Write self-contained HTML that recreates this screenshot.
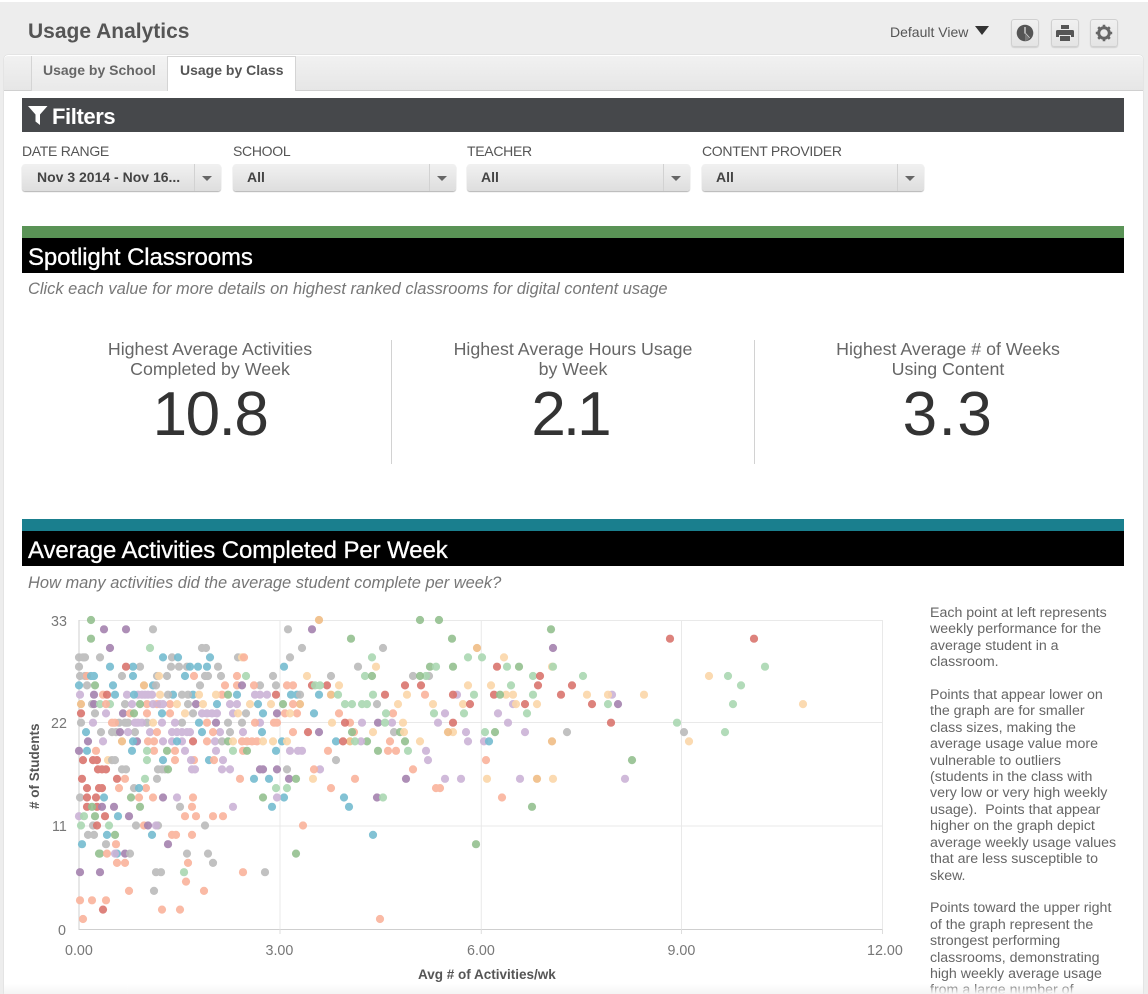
<!DOCTYPE html>
<html><head><meta charset="utf-8"><title>Usage Analytics</title>
<style>
html,body{margin:0;padding:0;background:#fff}
#w{position:relative;width:1148px;height:994px;overflow:hidden;background:#ededed;font-family:"Liberation Sans",sans-serif;filter:blur(.35px)}
#w div,#w span.a{position:absolute;white-space:nowrap}
.btn{top:19px;width:26px;height:26px;border:1px solid #d0d0d0;border-radius:3px;background:linear-gradient(#f0f0f0,#e4e4e4);box-shadow:0 1px 1px rgba(0,0,0,.12)}
.lab{top:143px;font-size:14px;line-height:17px;color:#555;letter-spacing:-.3px}
.sel{top:164px;height:27px;border-radius:3px;background:linear-gradient(#f1f1f1,#dedede);box-shadow:0 1px 1px rgba(0,0,0,.3);font-size:14px;font-weight:bold;color:#444;line-height:27px}
.sel b{position:absolute;top:0;width:1px;height:27px;background:#d2d2d2}
.sel i{position:absolute;top:12px;width:0;height:0;border-left:5.5px solid transparent;border-right:5.5px solid transparent;border-top:5px solid #666}
.bar{left:22px;width:1102px;height:35px;background:#000;color:#fff;font-size:24px;line-height:40px;text-indent:6px;letter-spacing:-.1px;-webkit-text-stroke:.3px #fff}
.sub{left:28px;font-size:16.45px;line-height:18px;font-style:italic;color:#777}
.st{width:340px;text-align:center;font-size:17.8px;line-height:20px;color:#666;top:339px}
.num{width:340px;text-align:center;font-size:62px;line-height:70px;color:#333;top:380px}
.vl{top:340px;width:1px;height:124px;background:#d2d2d2}
svg{position:absolute;overflow:visible}
#c path{fill:none;stroke-linecap:round;stroke-width:8.2;opacity:.9}
.r{stroke:#d9746e}.s{stroke:#f9b39b}.o{stroke:#fbd6a8}.u{stroke:#efbd85}.g{stroke:#94c08f}.l{stroke:#aad7b1}.p{stroke:#a482ae}.q{stroke:#cbb2d6}.k{stroke:#bababa}.t{stroke:#74bbcf}
.ax{font-size:14.3px;fill:#777}
.ttl{font-size:13.5px;font-weight:bold;fill:#555}
#tx{left:930px;top:605px;font-size:14.2px;line-height:16.4px;color:#666}
</style></head>
<body><div id="w">
<div style="left:0;top:0;width:1148px;height:2px;background:#fff"></div>
<div style="left:28px;top:19px;font-size:21px;line-height:26px;font-weight:bold;color:#555">Usage Analytics</div>
<div style="left:890px;top:24px;font-size:14px;line-height:17px;color:#555">Default View</div>
<div style="left:975px;top:26px;width:0;height:0;border-left:7.5px solid transparent;border-right:7.5px solid transparent;border-top:9px solid #333"></div>
<div class="btn" style="left:1011px"><svg style="left:4px;top:4px" width="18" height="18" viewBox="0 0 18 18"><circle cx="9" cy="9" r="8.3" fill="#555"/><path d="M9 3v6l4.5 5" fill="none" stroke="#e8e8e8" stroke-width="1.2"/><path d="M9 9l4.5 5A8.3 8.3 0 0 1 9 17.3z" fill="#777"/></svg></div>
<div class="btn" style="left:1051px"><svg style="left:4px;top:5px" width="18" height="16" viewBox="0 0 18 16"><path d="M5 0h8v4H5zM1.500 5h15a1.500 1.500 0 0 1 1.500 1.500V12h-3v-2H3v2H0V6.500A1.500 1.500 0 0 1 1.500 5zM4 11h10v5H4z" fill="#555"/></svg></div>
<div class="btn" style="left:1090px"><svg style="left:4px;top:4px" width="18" height="18" viewBox="0 0 18 18"><circle cx="9" cy="9" r="5.3" fill="none" stroke="#666" stroke-width="3"/><path d="M9 .8V4M9 14v3.200M.8 9H4M14 9h3.200M3.200 3.200l2.300 2.300M12.500 12.500l2.300 2.300M14.800 3.200l-2.300 2.300M5.500 12.500l-2.300 2.300" stroke="#666" stroke-width="2.600" fill="none"/></svg></div>

<div style="left:4px;top:55px;width:1139px;height:939px;background:#fff;border-radius:4px 4px 0 0;box-shadow:0 0 1px #bbb"></div>
<div style="left:4px;top:56px;width:1139px;height:34px;background:linear-gradient(#f1f1f1,#e6e6e6);border-bottom:1px solid #d0d0d0;border-radius:4px 4px 0 0"></div>
<div style="left:31px;top:56px;width:135px;height:35px;background:linear-gradient(#f3f3f3,#e9e9e9);border-left:1px solid #d4d4d4;font-size:14px;font-weight:bold;color:#666;line-height:28px;text-indent:11px">Usage by School</div>
<div style="left:167px;top:56px;width:129px;height:35px;background:#fff;border:1px solid #d4d4d4;border-bottom:0;box-sizing:border-box;font-size:14px;font-weight:bold;color:#555;line-height:27px;text-indent:12px">Usage by Class</div>

<div style="left:22px;top:98px;width:1102px;height:34px;background:#46484b;color:#fff;font-size:22px;font-weight:bold;line-height:38px;text-indent:30px;letter-spacing:-.4px">Filters</div>
<svg style="left:28px;top:106px" width="20" height="19" viewBox="0 0 20 19"><path d="M0 0h19.500L12 8.500V19l-4.500-3.500v-7z" fill="#fff"/></svg>

<div class="lab" style="left:22px">DATE RANGE</div>
<div class="lab" style="left:233px">SCHOOL</div>
<div class="lab" style="left:467px">TEACHER</div>
<div class="lab" style="left:702px">CONTENT PROVIDER</div>
<div class="sel" style="left:22px;width:199px;text-indent:15px">Nov 3 2014 - Nov 16...<b style="left:172px"></b><i style="left:180px"></i></div>
<div class="sel" style="left:233px;width:223px;text-indent:14px">All<b style="left:196px"></b><i style="left:204px"></i></div>
<div class="sel" style="left:467px;width:223px;text-indent:14px">All<b style="left:196px"></b><i style="left:204px"></i></div>
<div class="sel" style="left:702px;width:222px;text-indent:14px">All<b style="left:195px"></b><i style="left:203px"></i></div>

<div style="left:22px;top:226px;width:1102px;height:12px;background:#5a9356"></div>
<div class="bar" style="top:238px">Spotlight Classrooms</div>
<div class="sub" style="top:280px">Click each value for more details on highest ranked classrooms for digital content usage</div>

<div class="st" style="left:40px">Highest Average Activities<br>Completed by Week</div>
<div class="num" style="left:40px;letter-spacing:-1.5px">10.8</div>
<div class="vl" style="left:391px"></div>
<div class="st" style="left:403px">Highest Average Hours Usage<br>by Week</div>
<div class="num" style="left:400px;letter-spacing:-3px">2.1</div>
<div class="vl" style="left:754px"></div>
<div class="st" style="left:778px">Highest Average # of Weeks<br>Using Content</div>
<div class="num" style="left:778px;letter-spacing:1.5px">3.3</div>

<div style="left:22px;top:519px;width:1102px;height:12px;background:#1a7f8e"></div>
<div class="bar" style="top:531px">Average Activities Completed Per Week</div>
<div class="sub" style="top:574px">How many activities did the average student complete per week?</div>

<svg style="left:0;top:0" width="1148" height="994" viewBox="0 0 1148 994">
<path d="M79 620.500H882.500V929M79 722.500H882.500M79 826H882.500M280 620.500V929M481.300 620.500V929M681.500 620.500V929" fill="none" stroke="#e9e9e9" stroke-width="1"/>
<path d="M79 620V929.500H882.500" fill="none" stroke="#cfcfcf" stroke-width="1"/>
<path d="M280 929v5M481.300 929v5M681.500 929v5M882.500 929v5" stroke="#ddd" fill="none"/>
<text class="ax" x="51" y="626">33</text><text class="ax" x="51" y="728">22</text><text class="ax" x="52" y="831">11</text><text class="ax" x="58" y="935">0</text>
<text class="ax" x="65" y="955">0.00</text><text class="ax" x="265.500" y="955">3.00</text><text class="ax" x="467" y="955">6.00</text><text class="ax" x="667.500" y="955">9.00</text><text class="ax" x="867" y="955">12.00</text>
<text class="ttl" x="418" y="979">Avg # of Activities/wk</text>
<text class="ttl" transform="translate(39,809) rotate(-90)">
# of Students</text>
<g id="c">
<g transform="translate(0,620)"><path class="g" d="M91 0h0M420 0h0M439 0h0"/><path class="u" d="M319 0h0"/></g>
<g transform="translate(0,629.3)"><path class="p" d="M104 0h0M126 0h0M312 0h0"/><path class="k" d="M153 0h0M288 0h0"/><path class="g" d="M551 0h0"/></g>
<g transform="translate(0,638.7)"><path class="g" d="M91 0h0M351 0h0M452 0h0"/><path class="r" d="M670 0h0M754 0h0"/></g>
<g transform="translate(0,648)"><path class="p" d="M110 0h0M553 0h0"/><path class="l" d="M150 0h0"/><path class="k" d="M202 0h0M206 0h0M302 0h0M383 0h0"/><path class="u" d="M477 0h0"/></g>
<g transform="translate(0,657.4)"><path class="k" d="M79 0h0M83 0h0M85 0h0M100 0h0M172 0h0M238 0h0M290 0h0"/><path class="t" d="M163 0h0M178 0h0M210 0h0"/><path class="o" d="M242 0h0"/><path class="s" d="M244 0h0"/><path class="l" d="M372 0h0M468 0h0M482 0h0"/><path class="o" d="M504 0h0"/></g>
<g transform="translate(0,666.7)"><path class="k" d="M79 0h0M140 0h0M171 0h0M179 0h0M187 0h0M218 0h0M358 0h0"/><path class="t" d="M110 0h0M133 0h0M190 0h0M198 0h0M207 0h0M284 0h0"/><path class="r" d="M126 0h0M497 0h0"/><path class="o" d="M376 0h0M552 0h0"/><path class="g" d="M430 0h0M453 0h0M519 0h0"/><path class="l" d="M436 0h0M507 0h0M553 0h0M765 0h0"/></g>
<g transform="translate(0,676)"><path class="k" d="M80 0h0M85 0h0M122 0h0M157 0h0M167 0h0M205 0h0M208 0h0M221 0h0M273 0h0M331 0h0M413 0h0M429 0h0"/><path class="s" d="M87 0h0M194 0h0M237 0h0"/><path class="t" d="M91 0h0M94 0h0M133 0h0M185 0h0"/><path class="o" d="M159 0h0M307 0h0M709 0h0"/><path class="l" d="M246 0h0M365 0h0M426 0h0M533 0h0M583 0h0M728 0h0"/><path class="g" d="M372 0h0M420 0h0"/><path class="r" d="M540 0h0"/></g>
<g transform="translate(0,685.4)"><path class="t" d="M79 0h0M113 0h0M153 0h0"/><path class="k" d="M87 0h0M156 0h0M200 0h0M260 0h0M276 0h0"/><path class="g" d="M95 0h0"/><path class="u" d="M144 0h0"/><path class="s" d="M225 0h0M237 0h0M254 0h0M287 0h0M293 0h0"/><path class="p" d="M242 0h0"/><path class="r" d="M312 0h0M327 0h0M405 0h0M421 0h0M538 0h0M572 0h0"/><path class="l" d="M315 0h0M320 0h0M511 0h0M741 0h0"/><path class="o" d="M339 0h0M468 0h0M491 0h0"/></g>
<g transform="translate(0,694.7)"><path class="q" d="M80 0h0M127 0h0M138 0h0M142 0h0M145 0h0M148 0h0M152 0h0M255 0h0M260 0h0M267 0h0M457 0h0M612 0h0"/><path class="p" d="M94 0h0"/><path class="s" d="M103 0h0M222 0h0M425 0h0"/><path class="r" d="M107 0h0M276 0h0M385 0h0M453 0h0M494 0h0M561 0h0"/><path class="t" d="M115 0h0M134 0h0M173 0h0M193 0h0M237 0h0M291 0h0M297 0h0M319 0h0"/><path class="o" d="M160 0h0M199 0h0M216 0h0M407 0h0M506 0h0M513 0h0M587 0h0M608 0h0M644 0h0"/><path class="k" d="M168 0h0M182 0h0M188 0h0M300 0h0"/><path class="g" d="M228 0h0M500 0h0"/><path class="u" d="M331 0h0"/><path class="l" d="M338 0h0M373 0h0M474 0h0M533 0h0"/></g>
<g transform="translate(0,704.1)"><path class="u" d="M81 0h0M300 0h0"/><path class="k" d="M92 0h0M125 0h0M188 0h0M377 0h0"/><path class="p" d="M94 0h0M196 0h0M618 0h0"/><path class="l" d="M100 0h0M110 0h0M345 0h0M352 0h0M362 0h0M367 0h0M608 0h0M733 0h0"/><path class="s" d="M106 0h0M147 0h0M157 0h0M170 0h0M293 0h0"/><path class="q" d="M132 0h0M153 0h0M160 0h0M163 0h0M230 0h0M237 0h0M513 0h0"/><path class="g" d="M140 0h0M283 0h0"/><path class="o" d="M177 0h0M203 0h0M250 0h0M271 0h0M398 0h0M433 0h0M463 0h0M516 0h0M537 0h0M803 0h0"/><path class="t" d="M217 0h0M258 0h0"/><path class="r" d="M470 0h0M525 0h0M592 0h0"/></g>
<g transform="translate(0,713.4)"><path class="r" d="M81 0h0"/><path class="k" d="M95 0h0M193 0h0M246 0h0"/><path class="q" d="M106 0h0M202 0h0M207 0h0M212 0h0M217 0h0M233 0h0M445 0h0M498 0h0"/><path class="p" d="M123 0h0M277 0h0"/><path class="s" d="M130 0h0M147 0h0M170 0h0M285 0h0M297 0h0M339 0h0M393 0h0"/><path class="g" d="M134 0h0"/><path class="t" d="M162 0h0M263 0h0M314 0h0"/><path class="o" d="M185 0h0M238 0h0M290 0h0"/><path class="l" d="M386 0h0M434 0h0M464 0h0M527 0h0"/></g>
<g transform="translate(0,722.7)"><path class="k" d="M81 0h0M119 0h0M125 0h0M128 0h0M147 0h0M182 0h0M228 0h0M242 0h0"/><path class="q" d="M93 0h0M135 0h0M138 0h0M142 0h0M162 0h0M175 0h0M260 0h0M362 0h0M392 0h0M438 0h0M508 0h0"/><path class="s" d="M112 0h0M115 0h0M207 0h0M255 0h0M274 0h0M277 0h0M350 0h0"/><path class="o" d="M153 0h0M332 0h0M403 0h0"/><path class="t" d="M199 0h0"/><path class="p" d="M216 0h0M378 0h0"/><path class="r" d="M345 0h0M453 0h0M611 0h0"/><path class="l" d="M385 0h0M677 0h0"/></g>
<g transform="translate(0,732.1)"><path class="t" d="M86 0h0M202 0h0M262 0h0"/><path class="k" d="M101 0h0M112 0h0M116 0h0M135 0h0M230 0h0M394 0h0M567 0h0M684 0h0"/><path class="p" d="M120 0h0M319 0h0"/><path class="q" d="M128 0h0M150 0h0M172 0h0M177 0h0M182 0h0M187 0h0M190 0h0M220 0h0M243 0h0M466 0h0M525 0h0"/><path class="s" d="M157 0h0M213 0h0M293 0h0M354 0h0"/><path class="r" d="M308 0h0"/><path class="g" d="M352 0h0M400 0h0M495 0h0"/><path class="o" d="M373 0h0M404 0h0M453 0h0"/><path class="u" d="M448 0h0"/><path class="l" d="M485 0h0M725 0h0"/></g>
<g transform="translate(0,741.4)"><path class="p" d="M88 0h0M137 0h0"/><path class="q" d="M103 0h0M163 0h0M172 0h0M182 0h0M215 0h0M468 0h0M484 0h0"/><path class="u" d="M122 0h0M350 0h0M552 0h0"/><path class="t" d="M133 0h0M177 0h0M282 0h0M336 0h0M489 0h0"/><path class="s" d="M148 0h0M154 0h0M207 0h0M242 0h0M247 0h0M252 0h0M257 0h0M390 0h0"/><path class="r" d="M193 0h0M343 0h0"/><path class="k" d="M222 0h0"/><path class="g" d="M228 0h0M367 0h0M405 0h0"/><path class="o" d="M233 0h0M263 0h0M273 0h0M287 0h0M420 0h0M689 0h0"/><path class="q" d="M361 0h0"/><path class="l" d="M355 0h0"/></g>
<g transform="translate(0,750.8)"><path class="p" d="M79 0h0"/><path class="t" d="M87 0h0M132 0h0M276 0h0"/><path class="s" d="M96 0h0M154 0h0M175 0h0M243 0h0M328 0h0M388 0h0M396 0h0"/><path class="l" d="M147 0h0M233 0h0M408 0h0"/><path class="g" d="M167 0h0M247 0h0M378 0h0"/><path class="q" d="M185 0h0M216 0h0M290 0h0M298 0h0M302 0h0M426 0h0"/></g>
<g transform="translate(0,760.1)"><path class="r" d="M83 0h0M93 0h0M97 0h0"/><path class="o" d="M108 0h0"/><path class="k" d="M112 0h0M115 0h0M336 0h0"/><path class="l" d="M147 0h0"/><path class="t" d="M163 0h0M209 0h0"/><path class="s" d="M175 0h0M194 0h0M214 0h0M486 0h0"/><path class="q" d="M191 0h0M223 0h0M428 0h0"/><path class="g" d="M632 0h0"/></g>
<g transform="translate(0,769.4)"><path class="r" d="M98 0h0M102 0h0M106 0h0"/><path class="k" d="M122 0h0M126 0h0M158 0h0M162 0h0M165 0h0M287 0h0"/><path class="g" d="M168 0h0"/><path class="q" d="M192 0h0M195 0h0M222 0h0M230 0h0M320 0h0"/><path class="p" d="M260 0h0M263 0h0M277 0h0"/><path class="s" d="M314 0h0M413 0h0"/></g>
<g transform="translate(0,778.8)"><path class="r" d="M82 0h0M117 0h0"/><path class="s" d="M125 0h0M240 0h0M355 0h0"/><path class="l" d="M145 0h0"/><path class="k" d="M157 0h0"/><path class="t" d="M254 0h0M269 0h0"/><path class="p" d="M289 0h0M406 0h0"/><path class="g" d="M296 0h0"/><path class="o" d="M313 0h0M487 0h0M553 0h0"/><path class="q" d="M445 0h0M461 0h0M520 0h0M625 0h0"/><path class="u" d="M537 0h0"/></g>
<g transform="translate(0,788.1)"><path class="r" d="M87 0h0M99 0h0M102 0h0"/><path class="s" d="M119 0h0M146 0h0M331 0h0M436 0h0M440 0h0"/><path class="k" d="M134 0h0"/><path class="t" d="M139 0h0"/><path class="l" d="M276 0h0M287 0h0"/></g>
<g transform="translate(0,797.5)"><path class="k" d="M80 0h0"/><path class="r" d="M87 0h0M96 0h0"/><path class="t" d="M104 0h0M284 0h0M344 0h0"/><path class="g" d="M131 0h0M263 0h0"/><path class="s" d="M139 0h0M153 0h0M193 0h0M502 0h0"/><path class="p" d="M163 0h0M377 0h0"/><path class="q" d="M177 0h0M277 0h0"/><path class="l" d="M383 0h0"/></g>
<g transform="translate(0,806.8)"><path class="r" d="M87 0h0M97 0h0"/><path class="g" d="M92 0h0M140 0h0M532 0h0"/><path class="p" d="M102 0h0M114 0h0"/><path class="k" d="M180 0h0"/><path class="s" d="M192 0h0"/><path class="q" d="M233 0h0"/><path class="t" d="M272 0h0M349 0h0"/></g>
<g transform="translate(0,816.2)"><path class="q" d="M79 0h0"/><path class="l" d="M84 0h0"/><path class="g" d="M95 0h0"/><path class="r" d="M105 0h0"/><path class="t" d="M118 0h0"/><path class="p" d="M129 0h0"/><path class="s" d="M185 0h0M196 0h0M213 0h0M223 0h0"/></g>
<g transform="translate(0,825.5)"><path class="l" d="M81 0h0M109 0h0"/><path class="k" d="M93 0h0M136 0h0M158 0h0M205 0h0"/><path class="r" d="M97 0h0"/><path class="s" d="M144 0h0M303 0h0"/><path class="p" d="M148 0h0"/><path class="q" d="M156 0h0"/></g>
<g transform="translate(0,834.9)"><path class="k" d="M88 0h0M94 0h0"/><path class="t" d="M107 0h0M152 0h0M373 0h0"/><path class="g" d="M115 0h0"/><path class="s" d="M172 0h0M176 0h0M192 0h0"/></g>
<g transform="translate(0,844.2)"><path class="t" d="M82 0h0"/><path class="k" d="M106 0h0"/><path class="s" d="M116 0h0"/><path class="p" d="M168 0h0"/><path class="g" d="M476 0h0"/></g>
<g transform="translate(0,853.6)"><path class="g" d="M99 0h0M100 0h0M296 0h0"/><path class="s" d="M107 0h0"/><path class="t" d="M117 0h0"/><path class="q" d="M115 0h0"/><path class="p" d="M125 0h0"/><path class="k" d="M130 0h0M187 0h0M208 0h0"/></g>
<g transform="translate(0,862.9)"><path class="s" d="M117 0h0M125 0h0M188 0h0"/><path class="k" d="M213 0h0"/></g>
<g transform="translate(0,872.2)"><path class="p" d="M80 0h0M100 0h0"/><path class="k" d="M156 0h0M161 0h0M265 0h0"/><path class="l" d="M184 0h0"/><path class="s" d="M243 0h0"/></g>
<g transform="translate(0,881.6)"><path class="s" d="M186 0h0"/></g>
<g transform="translate(0,890.9)"><path class="s" d="M129 0h0M204 0h0"/><path class="k" d="M154 0h0"/></g>
<g transform="translate(0,900.3)"><path class="s" d="M80 0h0M92 0h0M106 0h0"/></g>
<g transform="translate(0,909.6)"><path class="r" d="M103 0h0"/><path class="s" d="M162 0h0M180 0h0"/></g>
<g transform="translate(0,919)"><path class="s" d="M83 0h0M380 0h0"/></g>
</g>
</svg>

<div id="tx">Each point at left represents<br>weekly performance for the<br>average student in a<br>classroom.<br><br>Points that appear lower on<br>the graph are for smaller<br>class sizes, making the<br>average usage value more<br>vulnerable to outliers<br>(students in the class with<br>very low or very high weekly<br>usage).&nbsp; Points that appear<br>higher on the graph depict<br>average weekly usage values<br>that are less susceptible to<br>skew.<br><br>Points toward the upper right<br>of the graph represent the<br>strongest performing<br>classrooms, demonstrating<br>high weekly average usage<br>from a large number of</div>
<div style="left:4px;top:984px;width:1139px;height:10px;background:linear-gradient(rgba(245,245,245,0),#f5f5f5)"></div>
</div></body></html>
